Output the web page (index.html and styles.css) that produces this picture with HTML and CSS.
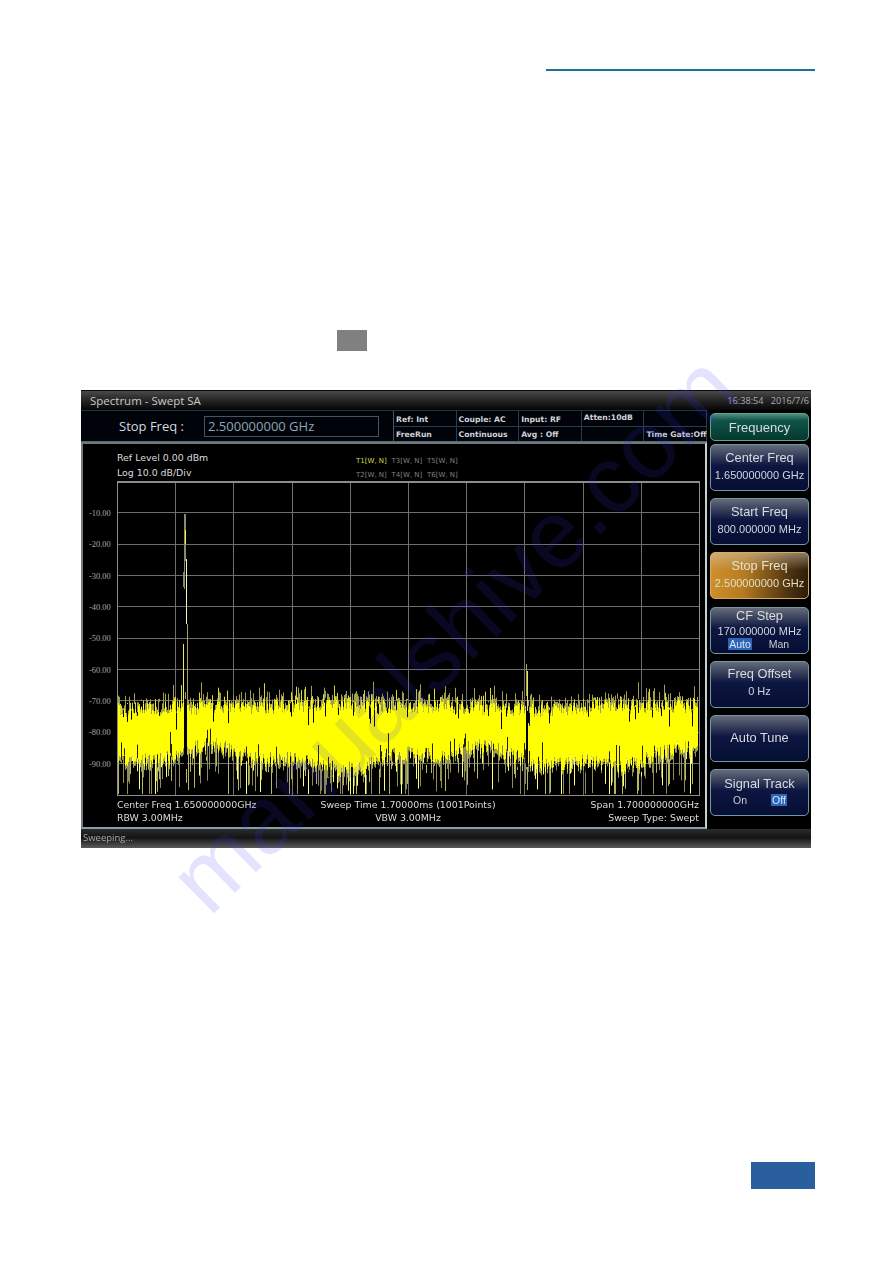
FILE: index.html
```html
<!DOCTYPE html>
<html lang="en">
<head>
    <meta charset="UTF-8">
    <meta name="viewport" content="width=device-width, initial-scale=1.0">
    <title>Spectrum - Swept SA</title>
    <link rel="stylesheet" href="styles.css">
</head>
<body>
    <div class="page">
        <div class="top-rule"></div>
        <div class="key-mark"></div>

        <div class="screen">
            <div class="title-bar">
                <span class="app-title">Spectrum - Swept SA</span>
                <span class="clock">16:38:54 &nbsp; 2016/7/6</span>
            </div>

            <div class="screen-body">
                <div class="left-col">
                    <div class="info-bar">
                        <span class="param-label">Stop Freq :</span>
                        <span class="param-value">2.500000000 GHz</span>
                        <div class="status-table">
                            <span>Ref: Int</span>
                            <span>Couple: AC</span>
                            <span>Input: RF</span>
                            <span class="raised">Atten:10dB</span>
                            <span></span>
                            <span>FreeRun</span>
                            <span>Continuous</span>
                            <span>Avg : Off</span>
                            <span></span>
                            <span>Time Gate:Off</span>
                        </div>
                    </div>

                    <div class="plot-panel">
                        <div class="plot-head">
                            <div class="ref-text">
                                <div>Ref Level 0.00 dBm</div>
                                <div>Log 10.0 dB/Div</div>
                            </div>
                            <div class="traces">
                                <span class="active">T1[W, N]</span>
                                <span>T3[W, N]</span>
                                <span>T5[W, N]</span>
                                <span>T2[W, N]</span>
                                <span>T4[W, N]</span>
                                <span>T6[W, N]</span>
                            </div>
                        </div>
                        <div class="plot-row">
                            <div class="y-axis">
                                <span>-10.00</span>
                                <span>-20.00</span>
                                <span>-30.00</span>
                                <span>-40.00</span>
                                <span>-50.00</span>
                                <span>-60.00</span>
                                <span>-70.00</span>
                                <span>-80.00</span>
                                <span>-90.00</span>
                            </div>
                            <canvas id="trace" width="583" height="315"></canvas>
                        </div>
                        <div class="plot-foot">
                            <span>Center Freq 1.650000000GHz</span>
                            <span class="mid">Sweep Time 1.70000ms (1001Points)</span>
                            <span class="end">Span 1.700000000GHz</span>
                            <span>RBW 3.00MHz</span>
                            <span class="mid">VBW 3.00MHz</span>
                            <span class="end">Sweep Type: Swept</span>
                        </div>
                    </div>
                </div>

                <div class="softkeys">
                    <div class="softkey menu-title">Frequency</div>
                    <div class="softkey">
                        <div class="key-name">Center Freq</div>
                        <div class="key-value">1.650000000 GHz</div>
                    </div>
                    <div class="softkey">
                        <div class="key-name">Start Freq</div>
                        <div class="key-value">800.000000 MHz</div>
                    </div>
                    <div class="softkey selected">
                        <div class="key-name">Stop Freq</div>
                        <div class="key-value">2.500000000 GHz</div>
                    </div>
                    <div class="softkey tight">
                        <div class="key-name">CF Step</div>
                        <div class="key-value">170.000000 MHz</div>
                        <div class="key-toggle"><span class="on">Auto</span><span>Man</span></div>
                    </div>
                    <div class="softkey">
                        <div class="key-name">Freq Offset</div>
                        <div class="key-value">0 Hz</div>
                    </div>
                    <div class="softkey single">
                        <div class="key-name">Auto Tune</div>
                    </div>
                    <div class="softkey">
                        <div class="key-name">Signal Track</div>
                        <div class="key-toggle"><span>On</span><span class="on">Off</span></div>
                    </div>
                </div>
            </div>

            <div class="status-bar">Sweeping...</div>
        </div>

        <div class="page-tab"></div>
        <div class="watermark">manualshive.com</div>
    </div>

    <script src="script.js"></script>
</body>
</html>
```

FILE: styles.css
```css
html, body {
    margin: 0;
    padding: 0;
    background: #fff;
}
.page {
    position: relative;
    width: 893px;
    height: 1263px;
    overflow: hidden;
    padding-top: 69px;
    box-sizing: border-box;
}
.top-rule {
    margin-left: 546px;
    width: 269px;
    height: 2px;
    background: #1b7396;
}
.key-mark {
    margin: 259px 0 0 337px;
    width: 30px;
    height: 21px;
    background: #808080;
}
.page-tab {
    margin: 314px 0 0 751px;
    width: 64px;
    height: 27px;
    background: #2a5f9e;
}
.watermark {
    position: absolute;
    left: 58px;
    top: 578px;
    width: 790px;
    text-align: center;
    font: 96px "Liberation Sans", Arial, sans-serif;
    color: rgba(60, 60, 240, 0.14);
    transform: rotate(-44.4deg);
    pointer-events: none;
}

/* instrument screen */
.screen {
    margin: 39px 0 0 81px;
    width: 730px;
    height: 458px;
    display: flex;
    flex-direction: column;
    background: #000;
    color: #d8d8d8;
    font-family: "DejaVu Sans", Verdana, sans-serif;
}
.title-bar {
    height: 20px;
    flex: none;
    display: flex;
    justify-content: space-between;
    align-items: center;
    padding: 0 2px 0 9px;
    border-top: 1px solid #0a0a0a;
    background: linear-gradient(#4a4a4a, #2e2e2e 35%, #050505);
    box-sizing: border-box;
    font-family: "Open Sans", sans-serif;
}
.app-title {
    font-size: 11.5px;
    color: #c8c8c8;
}
.clock {
    font-size: 9.2px;
    color: #a8acb0;
}
.screen-body {
    flex: 1;
    display: flex;
    min-height: 0;
}
.left-col {
    width: 626px;
    flex: none;
    display: flex;
    flex-direction: column;
}
.info-bar {
    height: 32px;
    flex: none;
    display: flex;
    align-items: center;
    box-sizing: border-box;
    border-top: 1px solid #1c3644;
    border-bottom: 1px solid #56666c;
    background: #01030a;
    font-family: "Open Sans", sans-serif;
}
.param-label {
    width: 85px;
    margin-left: 38px;
    font-size: 13px;
    color: #d4dade;
}
.param-value {
    width: 175px;
    height: 21px;
    margin-right: 14px;
    padding-left: 3px;
    box-sizing: border-box;
    border: 1px solid #46565c;
    font-size: 13px;
    line-height: 19px;
    color: #8fa6b4;
}
.status-table {
    width: 313px;
    height: 30px;
    display: grid;
    grid-template-columns: repeat(5, 62.6px);
    grid-template-rows: 16px 14px;
    font: bold 7.7px "DejaVu Sans", Verdana, sans-serif;
    color: #d0d4d8;
    border-left: 1px solid #46565c;
    box-sizing: border-box;
}
.status-table span {
    padding-left: 2px;
    line-height: 17px;
    border-right: 1px solid #2a3c44;
    white-space: nowrap;
}
.status-table span:nth-child(-n+5) {
    border-bottom: 1px solid #2a3c44;
}
.status-table span:nth-child(n+6) {
    line-height: 16px;
}
.status-table span.raised {
    line-height: 14px;
}
.plot-panel {
    flex: 1;
    min-height: 0;
    box-sizing: border-box;
    border-top: 2px solid #6a7a7e;
    border-left: 2px solid #767a7c;
    border-right: 2px solid #c4d0d2;
    border-bottom: 2px solid #86a0a8;
    background: #000;
    padding-top: 8px;
    display: flex;
    flex-direction: column;
}
.plot-head {
    height: 29px;
    padding-left: 34px;
    display: flex;
    flex: none;
}
.ref-text {
    width: 239px;
    margin-top: -2px;
    font-size: 9.4px;
    line-height: 15px;
    color: #dcdcdc;
}
.traces {
    display: grid;
    grid-template-columns: repeat(3, 35.5px);
    grid-auto-rows: 14px;
    padding-top: 2px;
    font-size: 7px;
    line-height: 14px;
    color: #808080;
    white-space: nowrap;
}
.traces .active {
    color: #d8d84c;
}
.plot-row {
    display: flex;
    height: 315px;
    flex: none;
}
.y-axis {
    width: 34px;
    flex: none;
    padding-top: 16px;
    display: flex;
    flex-direction: column;
    box-sizing: border-box;
    font-family: "Liberation Serif", serif;
    font-size: 8.4px;
    color: #a8a8a8;
}
.y-axis span {
    height: 31.35px;
    line-height: 33px;
    padding-left: 6px;
}
#trace {
    display: block;
    width: 583px;
    height: 315px;
}
.plot-foot {
    margin: 2px 6px 0 34px;
    display: grid;
    grid-template-columns: 1fr auto 1fr;
    grid-auto-rows: 13px;
    font-size: 9.4px;
    line-height: 14px;
    color: #dcdcdc;
}
.plot-foot .mid {
    text-align: center;
}
.plot-foot .end {
    text-align: right;
}

/* softkeys */
.softkeys {
    flex: 1;
    display: flex;
    flex-direction: column;
    gap: 7.2px;
    padding: 3px 2px 0 3px;
    background: #000;
    font-family: "Liberation Sans", Arial, sans-serif;
}
.softkey {
    height: 47px;
    flex: none;
    box-sizing: border-box;
    display: flex;
    flex-direction: column;
    justify-content: center;
    align-items: center;
    padding-bottom: 4px;
    border: 1px solid #6f98a6;
    border-radius: 5px;
    background: linear-gradient(#666c7c, #3e4660 20%, #0c1640 46%, #060e34);
    color: #d8dce2;
}
.softkey.menu-title {
    height: 28px;
    padding-bottom: 0;
    margin-bottom: -4.2px;
    font-size: 13px;
    background: linear-gradient(#4f8f82, #0f5548 25%, #06382f);
    border-color: #5fa594;
}
.softkey.selected {
    background: linear-gradient(rgba(205, 195, 175, 0.55), rgba(205, 195, 175, 0) 38%),
        linear-gradient(95deg, #d1902c, #b57b22 35%, #4c3210 80%, #2a1c08);
    border-color: #d9a85c;
    color: #e6e0d0;
}
.softkey.selected .key-value {
    color: #e6dcc4;
}
.softkey.single {
    padding-bottom: 0;
}
.softkey.tight {
    justify-content: flex-start;
    padding-bottom: 0;
}
.key-name {
    font-size: 12.8px;
    line-height: 16px;
}
.key-value {
    margin-top: 3px;
    font-size: 11px;
    line-height: 13px;
    color: #d0d6dc;
}
.tight .key-value {
    margin-top: 1px;
}
.key-toggle {
    margin-top: 2px;
    width: 78px;
    display: grid;
    grid-template-columns: 1fr 1fr;
    justify-items: center;
    font-size: 10.5px;
    line-height: 12px;
    color: #c8ccd4;
}
.tight .key-toggle {
    margin-top: 0;
}
.key-toggle span {
    padding: 0 1px;
}
.key-toggle .on {
    background: #2d66b8;
    color: #d8e4f4;
}
.status-bar {
    height: 19px;
    flex: none;
    padding-left: 2px;
    line-height: 18px;
    font-family: "Open Sans", sans-serif;
    font-size: 9.5px;
    color: #a8a8a8;
    background: linear-gradient(#2c2c2c, #141414 45%, #5a5a5a);
}
```

FILE: script.js
```js
// spectrum trace, drawn with a fixed seed so every load looks the same
const canvas = document.getElementById('trace');
const ctx = canvas.getContext('2d');
const W = canvas.width;
const H = canvas.height;

let seed = 4711;
function rnd() {
    seed = (seed * 16807) % 2147483647;
    return seed / 2147483647;
}

function line(x, y1, y2, color) {
    ctx.fillStyle = color;
    ctx.fillRect(x, Math.min(y1, y2), 1, Math.abs(y2 - y1));
}

ctx.fillStyle = '#000';
ctx.fillRect(0, 0, W, H);

// grid
ctx.fillStyle = '#6e6e6e';
for (let i = 1; i < 10; i++) {
    ctx.fillRect(Math.round(i * 58.2), 0, 1, H);
}
for (let i = 1; i < 10; i++) {
    ctx.fillRect(0, Math.round(i * 31.35), W, 1);
}

// slow drift of the noise floor
function drift(x, a, b, c) {
    return Math.sin(x / a + c) * b + Math.sin(x / (a * 0.37) + c * 2) * b * 0.5;
}

const tops = [];
const bots = [];
for (let x = 1; x < W - 2; x++) {
    let top = 226 + drift(x, 60, 2, 1) + rnd() * 14 - 7;
    let bot = 277 + drift(x, 40, 8, 2.4) + rnd() * 16 - 8;
    tops[x] = top;
    bots[x] = bot;

    // dim hairs over and under the solid band
    let up = Math.pow(rnd(), 3) * 16 + 3;
    line(x, top, top - up, rnd() < 0.3 ? '#d8d830' : '#a0a050');

    let down = Math.pow(rnd(), 2) * 40 + 3;
    if (rnd() < 0.6) {
        let c = rnd() < 0.2 ? '#ffff70' : (rnd() < 0.4 ? '#b8b860' : '#8e8e58');
        line(x, bot, Math.min(bot + down, H - 2), c);
    } else {
        line(x, bot, bot + 4, '#a6a650');
    }
}
for (let x = 1; x < W - 2; x++) {
    line(x, tops[x], bots[x], '#ffff00');
}

// black nicks into the band from both sides
for (let i = 0; i < 50; i++) {
    let x = Math.floor(rnd() * (W - 4)) + 1;
    line(x, tops[x] - 2, tops[x] + rnd() * 18, '#000');
}
for (let i = 0; i < 60; i++) {
    let x = Math.floor(rnd() * (W - 4)) + 1;
    line(x, bots[x] + 3, bots[x] - rnd() * 18, '#20200a');
}

ctx.fillStyle = '#000';
ctx.fillRect(67, 218, 3, 70);
line(68, 33, 80, '#8b8b66');
line(67, 33, 80, '#8b8b66');
line(68, 49, 63, '#f0f060');
line(69, 78, 143, '#f4f4c0');
line(66, 91, 106, '#8b8b66');
line(67, 80, 108, '#8b8b66');
line(70, 143, 220, '#a0a068');
line(66, 163, 220, '#e8e870');

ctx.fillStyle = '#000';
ctx.fillRect(409, 228, 2, 58);
line(409, 183, 215, '#a8a850');
line(410, 190, 230, '#e4e460');

// frame
ctx.fillStyle = '#8c8c8c';
ctx.fillRect(0, 0, W, 2);
ctx.fillRect(0, 0, 1, H);
ctx.fillRect(W - 1, 0, 1, H);
ctx.fillRect(0, H - 1, W, 1);
```
